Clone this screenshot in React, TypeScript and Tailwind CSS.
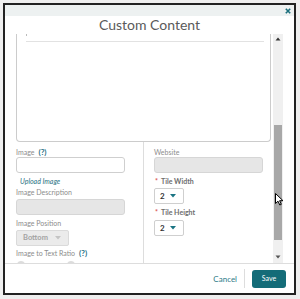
import React from "react";

const font = { fontFamily: "Lato, 'Open Sans', sans-serif" };

function Label({ children }: { children: React.ReactNode }) {
  return <div className="text-[7px] leading-[9px] text-[#8c8c8c] whitespace-nowrap">{children}</div>;
}

function Help() {
  return <span className="ml-[4px] text-[8px] font-bold text-[#1f6f86]">(?)</span>;
}

function ReqLabel({ children }: { children: React.ReactNode }) {
  return (
    <div className="text-[7px] leading-[9px] font-bold text-[#6d6d6d] whitespace-nowrap">
      <span className="text-[#d9534f] mr-[3px] ml-[1px]">*</span>
      {children}
    </div>
  );
}

function SmallSelect() {
  return (
    <div className="w-[30px] h-[16px] border border-[#cfcfcf] rounded-[2px] bg-white flex items-center pl-[5px] gap-[5px]">
      <span className="text-[8px] font-bold text-[#333] leading-none">2</span>
      <svg width="6" height="4" viewBox="0 0 6 4">
        <path d="M0 0 L6 0 L3 3.5 Z" fill="#1a7483" />
      </svg>
    </div>
  );
}

export default function App() {
  return (
    <div className="w-[300px] h-[299px] bg-[#efefef] pt-[3px] pl-[3px] relative" style={font}>
      <div className="w-[293px] h-[292px] border-2 border-[#222] bg-white flex flex-col">
        <div className="h-[11px] bg-[#edf1f1] flex items-center justify-end pr-[3px] shrink-0">
          <svg width="6" height="6" viewBox="0 0 6 6">
            <path d="M0.8 0.8 L5.2 5.2 M5.2 0.8 L0.8 5.2" stroke="#1a6f7c" strokeWidth="1.6" />
          </svg>
        </div>
        <div className="h-[18px] shrink-0 text-center text-[14px] leading-[18px] text-[#5a5a5a]">Custom Content</div>
        <div className="h-[229px] shrink-0 flex">
          <div className="flex-1 overflow-hidden pl-[11px] pr-[2px]">
            <div className="relative h-[108px] pt-[7px] border-x border-b border-[#cccccc] rounded-b-[4px]">
              <div className="absolute left-[9px] top-0 w-px h-[2px] bg-[#bbb]" />
              <div className="h-px bg-[#e2e2e2] ml-[9px] mr-[6px]" />
            </div>
            <div className="flex">
              <div className="w-[128px] border-r border-[#dddddd] pt-[6px] pb-[20px]">
                <Label>
                  Image<Help />
                </Label>
                <div className="w-[109px] h-[16px] border border-[#cfcfcf] rounded-[3px] bg-white" />
                <div className="mt-[4px] ml-[4px] text-[7px] leading-[9px] italic text-[#2b7384]">Upload Image</div>
                <div className="mt-[2px]">
                  <Label>Image Description</Label>
                </div>
                <div className="mt-[2px] w-[109px] h-[16px] border border-[#d6d6d6] rounded-[3px] bg-[#e6e6e6]" />
                <div className="mt-[4px]">
                  <Label>Image Position</Label>
                </div>
                <div className="mt-[2px] w-[53px] h-[16px] border border-[#dadada] rounded-[2px] bg-[#ebebeb] flex items-center pl-[6px]">
                  <span className="text-[7.5px] font-bold text-[#a3a3a3] leading-none">Bottom</span>
                  <svg className="ml-[7px]" width="6" height="4" viewBox="0 0 6 4">
                    <path d="M0 0 L6 0 L3 3.5 Z" fill="#c4c4c4" />
                  </svg>
                </div>
                <div className="mt-[3px]">
                  <Label>
                    Image to Text Ratio<Help />
                  </Label>
                </div>
                <div className="mt-[3px] relative h-[8px]">
                  <div className="absolute left-[1px] top-0 w-[8px] h-[8px] rounded-full bg-[#dcdcdc]" />
                  <div className="absolute left-[51px] top-0 w-[8px] h-[8px] rounded-full bg-[#dcdcdc]" />
                </div>
              </div>
              <div className="pl-[10px] pt-[6px]">
                <Label>Website</Label>
                <div className="w-[109px] h-[16px] border border-[#d6d6d6] rounded-[3px] bg-[#e6e6e6]" />
                <div className="mt-[4px]">
                  <ReqLabel>Tile Width</ReqLabel>
                </div>
                <div className="mt-[2px]">
                  <SmallSelect />
                </div>
                <div className="mt-[4px]">
                  <ReqLabel>Tile Height</ReqLabel>
                </div>
                <div className="mt-[3px]">
                  <SmallSelect />
                </div>
              </div>
            </div>
          </div>
          <div className="w-[10px] bg-[#f0f0f0] relative shrink-0">
            <svg className="absolute left-[2px] top-[3px]" width="6" height="4" viewBox="0 0 6 4">
              <path d="M0.5 3.5 L5.5 3.5 L3 0.5 Z" fill="#333" />
            </svg>
            <div className="absolute left-[1px] right-[1px] top-[91px] h-[115px] bg-[#a8a8a8]" />
            <svg className="absolute left-[2px] bottom-[4px]" width="6" height="4" viewBox="0 0 6 4">
              <path d="M0.5 0.5 L5.5 0.5 L3 3.5 Z" fill="#555" />
            </svg>
          </div>
          <div className="w-[11px] shrink-0" />
        </div>
        <div className="flex-1 border-t border-[#dddddd] flex items-center justify-end pr-[8px]">
          <span className="text-[8px] text-[#2c7a88]">Cancel</span>
          <div className="mx-[7px] w-px h-[19px] bg-[#dddddd]" />
          <div className="w-[34px] h-[18px] rounded-[3px] bg-[#146c78] flex items-center justify-center text-[7px] text-white">
            Save
          </div>
        </div>
      </div>
      <svg className="absolute left-[275px] top-[193px]" width="9" height="13" viewBox="0 0 9 13">
        <path d="M0.5 0.5 L0.5 10.5 L3 8.2 L4.8 12 L6.3 11.3 L4.6 7.7 L8 7.7 Z" fill="#fff" stroke="#000" strokeWidth="1" strokeLinejoin="round" />
      </svg>
    </div>
  );
}
